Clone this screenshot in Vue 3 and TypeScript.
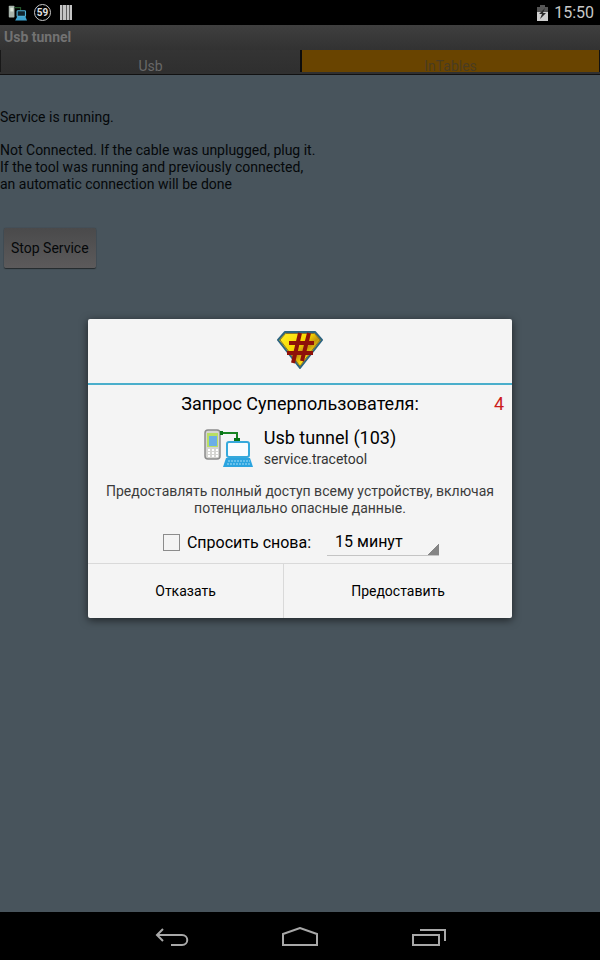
<script setup lang="ts">
import { ref } from 'vue'

const tabs = ['Usb', 'InTables']
const activeTab = ref('InTables')
const remember = ref(false)
const duration = ref('15 минут')
const secondsLeft = ref(4)
const durations = ['15 минут', '30 минут', '60 минут']
</script>

<template>
  <div class="device">
    <header class="status">
      <div class="notifications">
        <svg class="mini" viewBox="0 0 50 40" aria-hidden="true">
          <rect x="2" y="1" width="15" height="31" rx="2" fill="#a8b4ac" />
          <rect x="6" y="6" width="8" height="10" fill="#dce8dc" />
          <path d="M17 6H33V13" fill="none" stroke="#23562b" stroke-width="3" />
          <rect x="24" y="14" width="22" height="15" rx="2" fill="#10242e" stroke="#4eb0d8" stroke-width="3" />
          <path d="M24 30H46L50 40H19Z" fill="#3fa3d0" />
        </svg>
        <span class="count">59</span>
        <svg class="bars" viewBox="0 0 12 15" aria-hidden="true">
          <rect width="12" height="15" fill="#5c5c5c" />
          <path d="M0 0h2v15H0zM3 0h3v15H3zM7 0h2v15H7zM10 0h2v15h-2z" fill="#c4c4c4" />
        </svg>
      </div>
      <div class="clock">
        <svg class="battery" viewBox="0 0 11 16" aria-hidden="true">
          <path d="M3 0h5v2h3v6H0V2h3z" fill="#555" />
          <path d="M0 7h11v9H0z" fill="#cfcfcf" />
          <path d="M8 3L2 9h3l-2 5 6-6H6z" fill="#2b2b2b" />
        </svg>
        <span>15:50</span>
      </div>
    </header>

    <main class="stage">
      <h1 class="title">Usb tunnel</h1>
      <nav class="tabs">
        <button
          v-for="tab in tabs"
          :key="tab"
          class="tab"
          :class="{ active: tab === activeTab }"
          @click="activeTab = tab"
        >{{ tab }}</button>
      </nav>
      <section class="content">
        <p>Service is running.</p>
        <p>
          Not Connected. If the cable was unplugged, plug it.<br />
          If the tool was running and previously connected,<br />
          an automatic connection will be done
        </p>
        <button class="stop">Stop Service</button>
      </section>

      <div class="overlay">
        <section class="dialog" role="dialog" aria-labelledby="request">
          <div class="brand">
            <svg viewBox="0 0 46 38" aria-hidden="true">
              <defs>
                <linearGradient id="gold" x1="0" y1="0" x2="1" y2="1">
                  <stop offset="0" stop-color="#fff22a" />
                  <stop offset="0.4" stop-color="#f8d800" />
                  <stop offset="0.55" stop-color="#c4960c" />
                  <stop offset="0.7" stop-color="#ffe312" />
                  <stop offset="1" stop-color="#d9b000" />
                </linearGradient>
              </defs>
              <path d="M8 1H38L45 9L23 37L1 9Z" fill="url(#gold)" stroke="#2d6480" stroke-width="2" stroke-linejoin="round" />
              <path d="M8.500 2.500H37.500L43 9L23 35L3 9Z" fill="none" stroke="#8b7428" stroke-width="1" />
              <path d="M23 2L16 32M32 2L25 30M12 12H37M10 22H36" fill="none" stroke="#8e1109" stroke-width="4" />
            </svg>
          </div>
          <div class="heading">
            <h2 id="request">Запрос Суперпользователя:</h2>
            <span class="timer">{{ secondsLeft }}</span>
          </div>
          <div class="app">
            <svg class="appicon" viewBox="0 0 50 40" aria-hidden="true">
              <rect x="1" y="2" width="15" height="29" rx="3" fill="#d5d5d2" stroke="#8c8c8c" stroke-width="1.500" />
              <rect x="3" y="5" width="11" height="14" fill="#b9df63" />
              <rect x="5" y="8" width="8" height="10" fill="#6baee6" />
              <path d="M4 22h2M8 22h2M12 22h2M4 25h2M8 25h2M12 25h2M4 28h2M8 28h2M12 28h2" stroke="#fff" stroke-width="2" />
              <path d="M16 5H33V12" fill="none" stroke="#188421" stroke-width="2" />
              <path d="M16 3h3v4h-3zM30 10h6v3h-6z" fill="#087516" />
              <rect x="23" y="14" width="22" height="15" rx="2" fill="#f8fcff" stroke="#35a9dc" stroke-width="2" />
              <path d="M22 30H46L49 39H19Z" fill="#2ba4df" />
              <path d="M24 33H46M23 36H47" stroke="#a3def8" stroke-width="1" stroke-dasharray="2 1" />
            </svg>
            <div>
              <div class="name">Usb tunnel (103)</div>
              <div class="package">service.tracetool</div>
            </div>
          </div>
          <p class="warning">Предоставлять полный доступ всему устройству, включая потенциально опасные данные.</p>
          <div class="options">
            <label class="again">
              <input v-model="remember" type="checkbox" />
              <span>Спросить снова:</span>
            </label>
            <select v-model="duration" aria-label="Период">
              <option v-for="d in durations" :key="d">{{ d }}</option>
            </select>
          </div>
          <div class="actions">
            <button>Отказать</button>
            <button>Предоставить</button>
          </div>
        </section>
      </div>
    </main>

    <footer class="navbar">
      <button aria-label="Назад">
        <svg viewBox="0 0 36 20"><path d="M9 2L3 8L9 14M3 8H28C35 8 35 18 28 18H17" /></svg>
      </button>
      <button aria-label="Домой">
        <svg viewBox="0 0 36 20"><path d="M1 18V7L18 1L35 7V18Z" /></svg>
      </button>
      <button aria-label="Недавние">
        <svg viewBox="0 0 36 20"><path d="M3 8H29V18H3ZM10 3H35V14" /></svg>
      </button>
    </footer>
  </div>
</template>

<style>
body {
  margin: 0;
  background: #000;
}
</style>

<style scoped>
.device {
  display: flex;
  flex-direction: column;
  min-height: 100vh;
  font-family: Roboto, "Noto Sans", sans-serif;
  font-size: 14px;
  color: #000;
}
button,
select {
  font: inherit;
  color: inherit;
  margin: 0;
  border: 0;
  border-radius: 0;
  background: none;
}
h1,
h2,
p {
  margin: 0;
  font-weight: 400;
}
.status {
  display: flex;
  justify-content: space-between;
  align-items: center;
  height: 25px;
  padding: 0 6px 0 8px;
  background: #000;
}
.notifications,
.clock {
  display: flex;
  align-items: center;
}
.notifications {
  gap: 7px;
}
.mini {
  width: 19px;
  height: 16px;
}
.count {
  box-sizing: border-box;
  width: 17px;
  height: 17px;
  border: 1px solid #c8c8c8;
  border-radius: 50%;
  color: #e0e0e0;
  font-size: 10px;
  font-weight: 700;
  line-height: 15px;
  text-align: center;
}
.bars {
  width: 12px;
  height: 15px;
  margin-left: 2px;
}
.clock {
  gap: 6px;
  color: #c8c8c8;
  font-size: 16px;
}
.battery {
  width: 11px;
  height: 16px;
}
.stage {
  position: relative;
  display: flex;
  flex: 1;
  flex-direction: column;
  background: #48545c;
}
.title {
  height: 25px;
  padding: 0 4px;
  background: linear-gradient(#3f3f3f, #323232);
  color: #727272;
  font-size: 14px;
  font-weight: 700;
  line-height: 25px;
}
.tabs {
  display: grid;
  grid-template-columns: 1fr 1fr;
  height: 22px;
  padding-bottom: 2px;
  background: #303030;
  border-bottom: 1px solid #111;
}
.tab {
  height: 22px;
  padding: 8px 0 0;
  overflow: hidden;
  border-left: 1px solid #181818;
  background: linear-gradient(#343434, #2f2f2f);
  color: #686868;
  line-height: 16px;
}
.tab.active {
  border-left: 2px solid #0c0c0c;
  border-right: 1px solid #111;
  background: #694400;
  color: #493c20;
}
.content {
  display: flex;
  flex-direction: column;
  align-items: flex-start;
  gap: 16px;
  padding-top: 34px;
  line-height: 17px;
  color: #05080a;
}
.stop {
  height: 40px;
  margin: 19px 4px;
  padding: 0 7px;
  border-radius: 2px;
  background: linear-gradient(#4a4a4b, #5c5a5b);
  box-shadow: 0 1px 1px #24292c, 0 0 1px #2a3034;
}
.overlay {
  position: absolute;
  inset: 0;
  display: flex;
  align-items: center;
  justify-content: center;
}
.dialog {
  width: calc(100% - 176px);
  max-width: 424px;
  background: #f4f4f4;
  border-radius: 2px;
  box-shadow: 0 2px 8px #0009;
}
.brand {
  display: flex;
  justify-content: center;
  height: 52px;
  padding-top: 12px;
  border-bottom: 2px solid #4aaecb;
}
.brand svg {
  width: 46px;
  height: 38px;
}
.heading {
  display: grid;
  grid-template-columns: 1fr auto 1fr;
  padding: 8px 8px 0;
  font-size: 18px;
  line-height: 22px;
}
.heading h2 {
  grid-column: 2;
  font-size: 18px;
}
.timer {
  color: #cc1c1c;
  text-align: right;
}
.app {
  display: flex;
  justify-content: center;
  align-items: center;
  gap: 10px;
  padding-top: 12px;
}
.appicon {
  width: 50px;
  height: 40px;
}
.name {
  font-size: 18px;
  line-height: 22px;
}
.package {
  color: #333;
  line-height: 20px;
}
.warning {
  padding: 14px 16px 0;
  color: #3b3b3b;
  line-height: 17px;
  text-align: center;
}
.options {
  display: flex;
  justify-content: center;
  gap: 16px;
  padding: 11px 0 7px 2px;
  font-size: 16px;
}
.again {
  display: flex;
  align-items: center;
  gap: 7px;
}
.again input {
  appearance: none;
  box-sizing: border-box;
  width: 17px;
  height: 17px;
  margin: 0;
  border: 1px solid #8c8c8c;
}
select {
  appearance: none;
  width: 112px;
  height: 28px;
  padding: 0 8px;
  border-bottom: 1px solid #c4c4c4;
  background: linear-gradient(135deg, transparent 50%, #858585 50%) right bottom / 12px 12px no-repeat;
}
.actions {
  display: grid;
  grid-template-columns: 195fr 229fr;
  border-top: 1px solid #d9d9d9;
}
.actions button {
  height: 54px;
}
.actions button + button {
  border-left: 1px solid #d9d9d9;
}
.navbar {
  display: flex;
  justify-content: center;
  gap: 92px;
  height: 46px;
  padding-top: 2px;
  background: #000;
}
.navbar button {
  display: flex;
  align-items: center;
  padding: 0;
}
.navbar svg {
  width: 36px;
  height: 20px;
  fill: none;
  stroke: #a8a8a8;
  stroke-width: 2;
}
</style>
